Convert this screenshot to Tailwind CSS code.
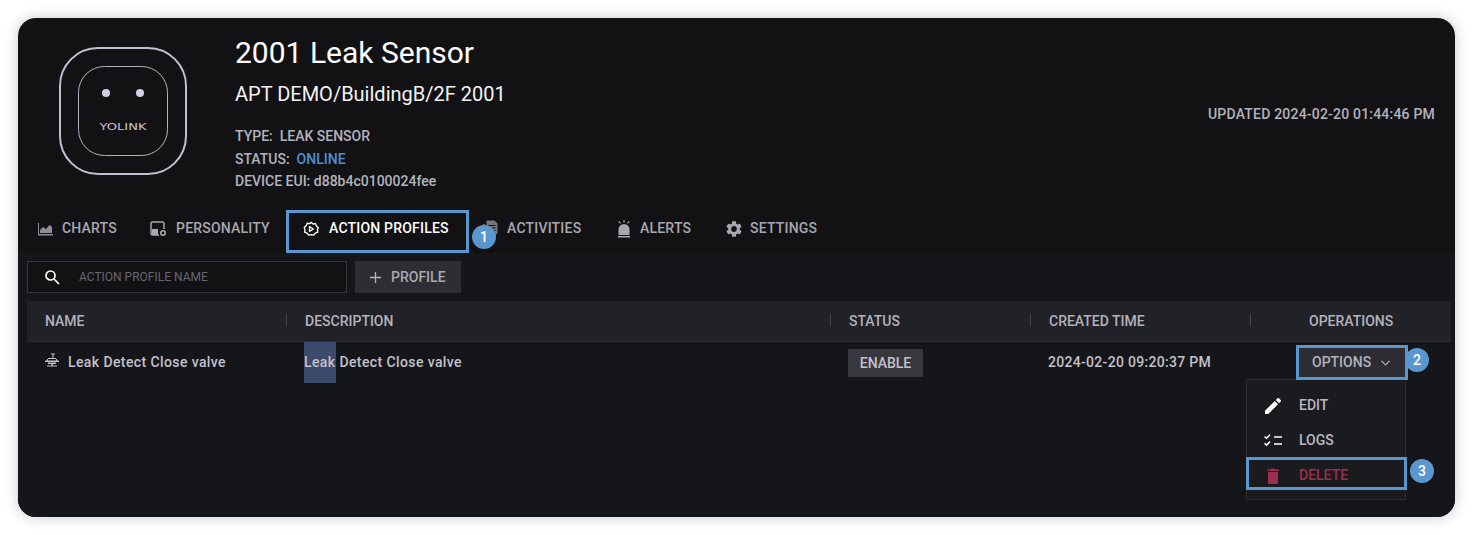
<!DOCTYPE html>
<html lang="en">
<head>
  <meta charset="UTF-8">
  <title>2001 Leak Sensor</title>
  <script src="https://cdn.jsdelivr.net/npm/@tailwindcss/browser@4"></script>
</head>
<body class="bg-white font-['Roboto',sans-serif] overflow-hidden">
<div class="h-[535px] p-[18px]">
  <div class="relative h-[499px] rounded-[18px] bg-[#121215] shadow-[0_0_14px_rgba(0,0,0,0.22)] overflow-hidden">

    <!-- device header -->
    <div class="flex h-[189px]">
      <div class="w-[217px] shrink-0 pl-[41px] pt-[29px]">
        <svg width="128" height="128" viewBox="0 0 128 128" fill="none">
          <rect x="1" y="1" width="126" height="126" rx="38" stroke="#c3bfd0" stroke-width="2"/>
          <rect x="19.5" y="19.5" width="89" height="89" rx="26" stroke="#b5b1c2" stroke-width="1"/>
          <circle cx="47" cy="46" r="4" fill="#d3cfe0"/>
          <circle cx="81" cy="46" r="4" fill="#d3cfe0"/>
          <text x="64" y="83" text-anchor="middle" font-family="DejaVu Sans" font-size="9" textLength="47" lengthAdjust="spacingAndGlyphs" fill="#c9c5d6">YOLINK</text>
        </svg>
      </div>
      <div class="pt-[16px]">
        <h1 class="text-[30px] leading-[38px] text-white">2001 Leak Sensor</h1>
        <div class="mt-[8px] text-[20px] leading-[28px] text-[#f2f2f4]">APT DEMO/BuildingB/2F 2001</div>
        <div class="mt-[17px] text-[14px] leading-[22.5px] font-medium text-[#b4b2bd]">
          <div>TYPE:&nbsp; LEAK SENSOR</div>
          <div>STATUS:&nbsp; <span class="text-[#4f8fd2]">ONLINE</span></div>
          <div>DEVICE EUI: d88b4c0100024fee</div>
        </div>
      </div>
      <div class="ml-auto pr-[20px] pt-[86px] text-[14px] leading-[20px] font-medium tracking-[0.2px] text-[#b4b2bd]">UPDATED 2024-02-20 01:44:46 PM</div>
    </div>

    <!-- tabs -->
    <div class="flex h-[46px] items-center pb-[3px] pl-[19px] text-[14px] font-medium tracking-[0.2px] text-[#a9a8b0]">
      <div class="flex w-[113px] items-center gap-[9px]">
        <svg width="16" height="16" viewBox="0 0 16 16" fill="#8f8e96"><path d="M1 2h1v11h14v1.500H1z"/><path d="M3 12V9l3-3 3 2 3.500-4 2.500 2v6z"/></svg>
        <span>CHARTS</span>
      </div>
      <div class="flex w-[153px] items-center gap-[9px]">
        <svg width="17" height="16" viewBox="0 0 17 16" fill="none"><path d="M9 14H2.500A1.500 1.500 0 0 1 1 12.500v-10A1.500 1.500 0 0 1 2.500 1h10A1.500 1.500 0 0 1 14 2.500V8" stroke="#a9a8b0" stroke-width="1.500"/><rect x="2" y="8" width="6" height="6" fill="#a9a8b0"/><circle cx="13" cy="12" r="2.200" stroke="#a9a8b0" stroke-width="1.600"/></svg>
        <span>PERSONALITY</span>
      </div>
      <div class="flex w-[179px] items-center gap-[10px] text-white">
        <svg width="16" height="16" viewBox="0 0 24 24" fill="none" stroke="#fff" stroke-width="2" stroke-linejoin="round"><path d="M12 2l3 2.500 3.800-.6 1.300 3.700 3 2.400L21.600 13l.6 3.800-3.700 1.300-2.400 3L12 20.500 8.500 21.100l-2.400-3-3.700-1.300L3 13 1.900 9.500l3-2.400 1.300-3.700L10 4z"/><path d="M9.800 8.500v7l5.700-3.500z"/></svg>
        <span>ACTION PROFILES</span>
      </div>
      <div class="flex w-[134px] items-center gap-[9px]">
        <svg width="16" height="17" viewBox="0 0 16 17" fill="none"><path d="M2 4v12h10" stroke="#8f8e96" stroke-width="1.500"/><path d="M4.500 0.500h8l3 3v10.500h-11z" fill="#77767e"/><path d="M6.500 5.500h7M6.500 8h7M6.500 10.500h7" stroke="#121215"/></svg>
        <span>ACTIVITIES</span>
      </div>
      <div class="flex w-[110px] items-center gap-[8px]">
        <svg width="16" height="18" viewBox="0 0 16 18" fill="#a9a8b0"><path d="M2.500 15V9.500a5.500 5.500 0 0 1 11 0V15z"/><path d="M2 16h12v1.500H2z"/><path d="M7.400 0h1.200v2.600H7.400zM2.400 1.800l.9-.8 1.700 1.900-.9.800zM13.600 1.800l-.9-.8-1.700 1.900.9.800z"/></svg>
        <span>ALERTS</span>
      </div>
      <div class="flex items-center gap-[8px]">
        <svg width="16" height="16" viewBox="2.400 2 19.200 20" fill="#a9a8b0"><path d="M19.140 12.940c.04-.3.060-.61.060-.94 0-.32-.02-.64-.07-.94l2.030-1.580a.49.49 0 0 0 .12-.61l-1.920-3.320a.49.49 0 0 0-.59-.22l-2.390.96c-.5-.38-1.030-.7-1.620-.94l-.36-2.540a.48.48 0 0 0-.48-.41h-3.840a.48.48 0 0 0-.47.41l-.36 2.540c-.59.24-1.130.57-1.620.94l-2.390-.96a.49.49 0 0 0-.59.22L2.740 8.870a.47.47 0 0 0 .12.61l2.030 1.580c-.05.3-.09.63-.09.94s.02.64.07.94l-2.030 1.580a.49.49 0 0 0-.12.61l1.920 3.320c.12.22.37.29.59.22l2.390-.96c.5.38 1.030.7 1.620.94l.36 2.540c.05.24.24.41.48.41h3.840c.24 0 .44-.17.47-.41l.36-2.540c.59-.24 1.130-.56 1.620-.94l2.390.96c.22.080.47 0 .59-.22l1.920-3.320a.47.47 0 0 0-.12-.61zM12 15.600A3.610 3.610 0 0 1 8.400 12c0-1.980 1.620-3.600 3.600-3.600s3.600 1.620 3.600 3.600-1.620 3.600-3.600 3.600z"/></svg>
        <span>SETTINGS</span>
      </div>
    </div>

    <!-- action profile panel -->
    <div class="h-[264px] bg-[#15161a] pl-[9px] pr-[4px]">
      <div class="flex h-[48px] items-start gap-[8px] pt-[8px]">
        <div class="flex h-[32px] w-[320px] items-center border border-[#35353c] bg-[#121215] pl-[16px]">
          <svg width="16" height="16" viewBox="0 0 16 16" fill="none" stroke="#fff" stroke-width="1.700"><circle cx="6.500" cy="6.500" r="4.500"/><path d="M10 10l5 5"/></svg>
          <span class="ml-[19px] text-[12px] text-[#66666e]">ACTION PROFILE NAME</span>
        </div>
        <div class="flex h-[32px] w-[106px] items-center gap-[10px] bg-[#2d2e33] pl-[15px] text-[14px] font-medium text-[#a9a8b0]">
          <svg width="11" height="11" viewBox="0 0 11 11" stroke="#b4b2bd" stroke-width="1.300"><path d="M5.500 0v11M0 5.500h11"/></svg>
          <span>PROFILE</span>
        </div>
      </div>

      <div class="grid h-[41px] grid-cols-[260px_544px_200px_220px_200px] items-center border-b border-[#2c2d33] bg-[#212227] pt-[1px] text-[14px] font-medium text-[#b4b2bd]">
        <div class="relative pl-[18px]">NAME<i class="absolute right-0 top-[3px] h-[12px] w-[1px] bg-[#45454c]"></i></div>
        <div class="relative pl-[18px]">DESCRIPTION<i class="absolute right-0 top-[3px] h-[12px] w-[1px] bg-[#45454c]"></i></div>
        <div class="relative pl-[18px]">STATUS<i class="absolute right-0 top-[3px] h-[12px] w-[1px] bg-[#45454c]"></i></div>
        <div class="relative pl-[18px]">CREATED TIME<i class="absolute right-0 top-[3px] h-[12px] w-[1px] bg-[#45454c]"></i></div>
        <div class="pl-[58px]">OPERATIONS</div>
      </div>

      <div class="grid h-[41px] grid-cols-[260px_544px_200px_220px_200px] items-center text-[14px] font-medium text-[#c3c1cc]">
        <div class="flex items-center gap-[9px] pl-[18px] tracking-[0.4px]">
          <svg class="-mt-[5px]" width="14" height="15" viewBox="0 0 14 15" fill="#c3c1cc"><path d="M6 .5h4v1H6zM7.500 1.500h1V5h-1zM3 5h8v1H3zM2 6h1v2H2zM11 6h1v2h-1zM0 7.500h14V9H0zM3 9.500h8V11H3zM6.500 11h1.500v1.500H6.500zM2 12.500h10v1H2z"/></svg>
          <span>Leak Detect Close valve</span>
        </div>
        <div class="flex h-[41px] items-center pl-[17px] tracking-[0.4px]"><span class="flex h-[41px] items-center bg-[#3c4a6b]">Leak</span>&nbsp;Detect Close valve</div>
        <div class="pl-[17px] pt-[1px]"><span class="inline-flex h-[28px] w-[75px] items-center justify-center bg-[#37383d] pt-[1px] text-[#c3c1cc]">ENABLE</span></div>
        <div class="pl-[17px] tracking-[0.3px]">2024-02-20 09:20:37 PM</div>
        <div class="pl-[47px]">
          <span class="flex h-[30px] w-[110px] items-center gap-[10px] bg-[#2d2e33] pl-[14px] text-[#b4b2bd]">OPTIONS
            <svg width="9" height="6" viewBox="0 0 9 6" fill="none" stroke="#b4b2bd" stroke-width="1.200"><path d="M.5 .8l4 4 4-4"/></svg>
          </span>
        </div>
      </div>
    </div>

    <!-- options menu -->
    <div class="absolute left-[1228px] top-[361px] h-[121px] w-[160px] border border-[#2c2d33] bg-[#1a1b1f] text-[14px] font-medium text-[#b9b8c0]">
      <div class="mt-[8px] flex h-[35px] items-center pl-[18px]">
        <svg class="mr-[18px]" width="16" height="16" viewBox="0 0 16 16" fill="#fff"><path d="M0 16v-3.300L9.800 2.900l3.300 3.300L3.300 16zM10.800 1.900 12.500.3a1 1 0 0 1 1.400 0l1.800 1.800a1 1 0 0 1 0 1.400l-1.600 1.700z"/></svg>
        EDIT
      </div>
      <div class="flex h-[35px] items-center pl-[17px]">
        <svg class="mr-[17px]" width="18" height="13" viewBox="0 0 18 13" fill="none" stroke="#fff" stroke-width="1.500"><path d="M.5 2.500l2 1.800L6 .8M.5 9.300l2 1.800L6 7.600M10 3h8M10 10h8"/></svg>
        LOGS
      </div>
      <div class="flex h-[35px] items-center pl-[20px] text-[#9b2f4e]">
        <svg class="mr-[20px]" width="12" height="16" viewBox="0 0 12 16" fill="#9b2f4e"><path d="M1 4h10v10.500a1.500 1.500 0 0 1-1.500 1.500h-7A1.500 1.500 0 0 1 1 14.500zM0 1.500h3.500L4.500.5h3l1 1H12V3H0z"/></svg>
        DELETE
      </div>
    </div>

    <!-- annotation boxes and numbered markers -->
    <div class="absolute left-[268px] top-[192px] h-[43px] w-[183px] border-[3px] border-[#5b97cf]"></div>
    <div class="absolute left-[1278px] top-[327px] h-[35px] w-[112px] border-[3px] border-[#5b97cf]"></div>
    <div class="absolute left-[1228px] top-[439px] h-[33px] w-[161px] border-[3px] border-[#5b97cf]"></div>
    <div class="absolute left-[454px] top-[207px] flex h-[24px] w-[24px] items-center justify-center rounded-full bg-[#5b97cf] text-[14px] font-medium text-white">1</div>
    <div class="absolute left-[1387px] top-[330px] flex h-[24px] w-[24px] items-center justify-center rounded-full bg-[#5b97cf] text-[14px] font-medium text-white">2</div>
    <div class="absolute left-[1392px] top-[441px] flex h-[24px] w-[24px] items-center justify-center rounded-full bg-[#5b97cf] text-[14px] font-medium text-white">3</div>
  </div>
</div>
</body>
</html>
